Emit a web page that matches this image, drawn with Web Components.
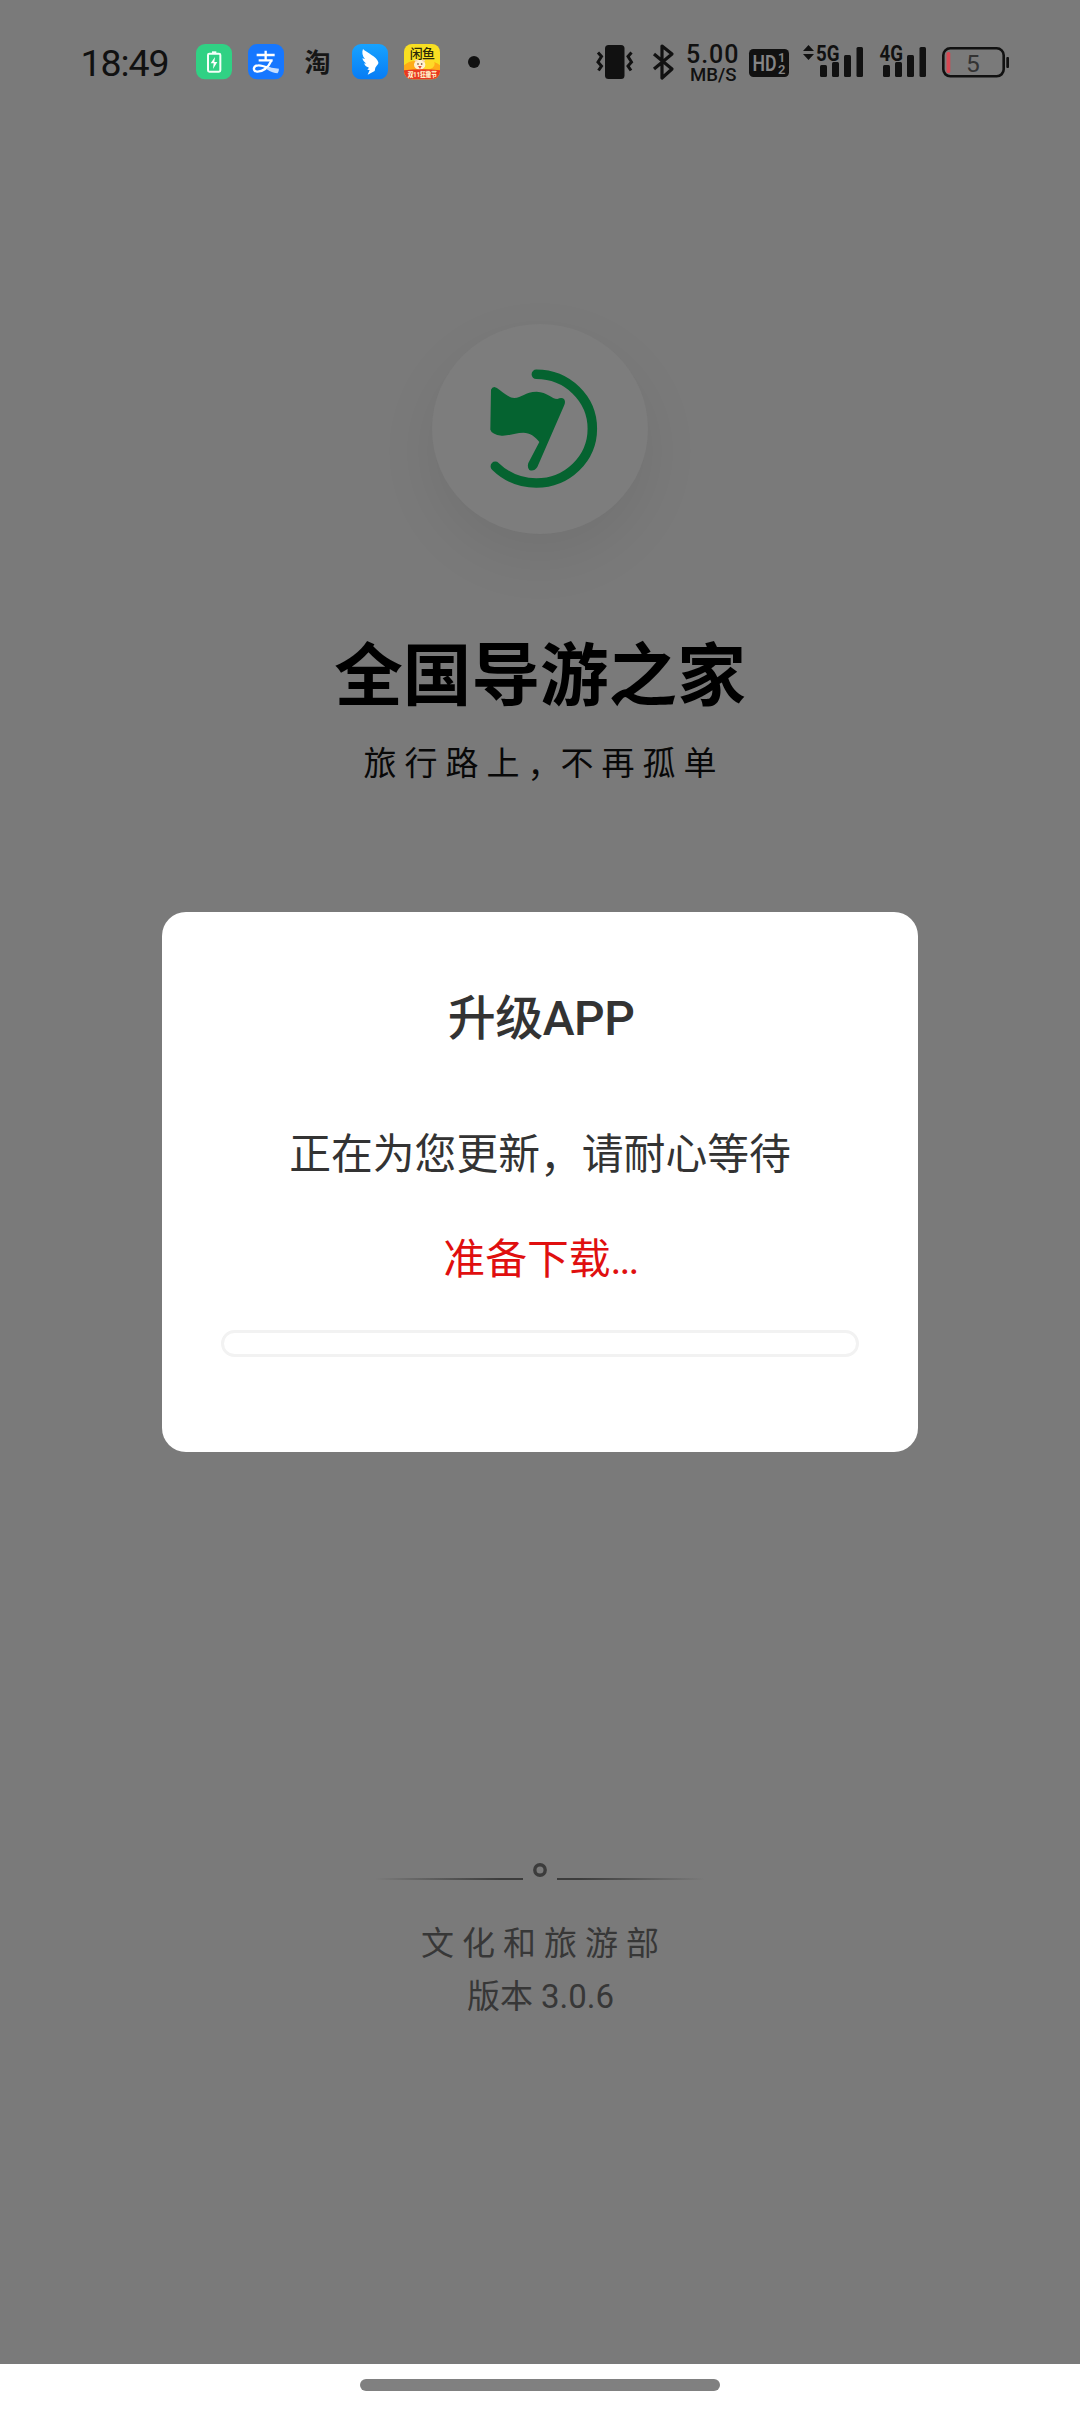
<!DOCTYPE html>
<html lang="zh-CN">
<head>
<meta charset="utf-8">
<title>全国导游之家</title>
<style>
html,body{margin:0;padding:0}
body{width:1080px;height:2412px;overflow:hidden;background:#7a7a7a;font-family:Roboto,"Noto Sans CJK SC",sans-serif}
</style>
</head>
<body>
<guide-app></guide-app>
<script>
const define = (name, html) => customElements.define(name, class extends HTMLElement {
  constructor() {
    super();
    const t = document.createElement('template');
    t.innerHTML = html;
    this.attachShadow({mode: 'open'}).append(t.content.cloneNode(true));
  }
});

define('status-bar', `
<style>
:host{display:flex;align-items:center;justify-content:space-between;height:124px;padding:0 71px 0 81px;box-sizing:border-box;color:#111}
div{display:flex;align-items:center}
svg{display:block;overflow:visible}
.apps{gap:16px}
.apps svg:first-child{margin-right:11px}
</style>
<div class="apps">
  <svg width="88" height="36" viewBox="81 44 88 36"><text x="80.500" y="75.500" font-size="37.500" textLength="89" fill="#111">18:49</text></svg>
  <svg width="36" height="36" viewBox="0 0 108 108"><rect width="108" height="106" rx="27" fill="#30d184"/><path d="M48 22h13v5h-13z" fill="#f4fff9"/><rect x="36" y="29" width="37" height="54" rx="4" fill="none" stroke="#f4fff9" stroke-width="6"/><path d="M57 39 44 58h9l-2 17 13-21h-9z" fill="#fff"/></svg>
  <svg width="36" height="36" viewBox="0 0 108 108"><rect width="108" height="106" rx="27" fill="#1677ff"/><g fill="none" stroke="#fff" stroke-width="7"><path d="M26 33h54M53 20v31M32 49h42"/><path d="M70 50C61 72 43 84 27 83C13 81 15 64 31 64C50 63 65 78 91 81" stroke-linecap="butt"/></g><path d="M60 70l33 4-4 14q-14 0-34-13z" fill="#c4ddff"/></svg>
  <svg width="36" height="36" viewBox="0 0 36 36"><text x="4.500" y="27.500" font-size="26" font-weight="700" fill="#161616">淘</text></svg>
  <svg width="36" height="36" viewBox="0 0 108 108"><defs><linearGradient id="d" x1="0" y1="0" x2="0" y2="1"><stop stop-color="#17a3ff"/><stop offset="1" stop-color="#087cf5"/></linearGradient></defs><rect width="108" height="106" rx="27" fill="url(#d)"/><path d="M33 15C44 26 75 38 79 55C80 60 76 63 70 71L68 81L47 92L53 78L46 77L51 71L42 67C39 64 37 61 37 58L43 59C36 54 32 48 31 43L39 45C31 36 29 25 33 15Z" fill="#fff"/></svg>
  <svg width="36" height="36" viewBox="0 0 108 108"><defs><clipPath id="c"><rect width="108" height="106" rx="24"/></clipPath></defs><g clip-path="url(#c)"><rect width="108" height="108" fill="#f8df22"/><path d="M0 64Q18 48 42 52H72Q94 52 108 64V84H0Z" fill="#ffab18"/><ellipse cx="70" cy="59" rx="22" ry="17" fill="#ffd928"/><ellipse cx="47" cy="62" rx="17" ry="15" fill="#fff0d2"/><path d="M30 49l8-4 3 9zM55 45l9 4-7 7z" fill="#f4d4b8"/><circle cx="42" cy="60" r="2.500" fill="#563216"/><circle cx="53" cy="60" r="2.500" fill="#563216"/><path d="M42 66h11l-5 9z" fill="#ea4a32"/><path d="M0 79Q54 72 108 79V108H0Z" fill="#e93922"/></g><text x="17" y="43" font-size="39" font-weight="500" fill="#2b2908" textLength="76">闲鱼</text><text x="11" y="98" font-size="19" font-weight="900" fill="#fff1c7" textLength="88" lengthAdjust="spacingAndGlyphs">双11狂撒节</text></svg>
  <svg width="56" height="36" viewBox="0 0 56 36"><circle cx="18" cy="18" r="6" fill="#111"/></svg>
</div>
<div>
  <svg width="414" height="40" viewBox="595 42 414 40" fill="#111">
    <rect x="605" y="45" width="19.500" height="34" rx="3.500"/>
    <g fill="none" stroke="#111" stroke-width="3"><path d="M598 52.500l3.500 4-3.500 5.500 3.500 4-3 4.500M631.500 52.500l-3.500 4 3.500 5.500-3.500 4 3 4.500"/></g>
    <path d="M654 54l18 15-10 9V46l10 8-18 15" fill="none" stroke="#111" stroke-width="3.200" stroke-linejoin="round"/>
    <text x="686" y="63" font-size="25" font-weight="500" textLength="52.500">5.00</text>
    <text x="690" y="80.500" font-size="18.500" font-weight="500" textLength="46.500" lengthAdjust="spacingAndGlyphs">MB/S</text>
    <rect x="749" y="49" width="40" height="28" rx="4.500"/>
    <g fill="#858585" font-weight="600"><text x="752.500" y="71" font-size="22" textLength="24" lengthAdjust="spacingAndGlyphs">HD</text><text x="778" y="62" font-size="13">1</text><text x="778" y="73.500" font-size="13">2</text></g>
    <path d="M803 51l5.500-6 5.500 6zM803 54h11l-5.500 6z"/>
    <text x="816" y="60.500" font-size="22" font-weight="700" textLength="23.500" lengthAdjust="spacingAndGlyphs">5G</text>
    <text x="879.500" y="60.500" font-size="22" font-weight="700" textLength="23.500" lengthAdjust="spacingAndGlyphs">4G</text>
    <g><rect x="820" y="65" width="7" height="12" rx="1.500"/><rect x="832" y="62" width="7" height="15" rx="1.500"/><rect x="844" y="55" width="7" height="22" rx="1.500"/><rect x="856.500" y="47" width="6.500" height="30" rx="1.500"/></g>
    <g><rect x="883" y="65" width="7" height="12" rx="1.500"/><rect x="895" y="62" width="7" height="15" rx="1.500"/><rect x="907" y="55" width="7" height="22" rx="1.500"/><rect x="919.500" y="47" width="6.500" height="30" rx="1.500"/></g>
    <rect x="943.300" y="48.300" width="60.400" height="28" rx="7" fill="none" stroke="#111" stroke-width="2.600"/>
    <rect x="946.500" y="52" width="3.800" height="21" rx="1.500" fill="#d64853"/>
    <rect x="1006.300" y="57" width="2.700" height="11" rx="1"/>
    <text x="973" y="71.500" font-size="24.500" text-anchor="middle" fill="#333">5</text>
  </svg>
</div>`);

define('guide-logo', `
<style>
:host{display:block;width:216px;height:210px;border-radius:50%;background:#7d7d7d;box-shadow:0 22px 60px rgba(0,0,0,.07)}
svg{display:block}
</style>
<svg width="216" height="210" viewBox="156 103 648 630" fill="#056330">
  <path d="M469 254C562 254 637 327 637 417C637 507 562 580 469 580C424 580 380 563 346 530" fill="none" stroke="#056330" stroke-width="28.500" stroke-linecap="round"/>
  <path d="M343 292Q350 293 360 302C378 315 388 325 403 325C425 325 435 306 470 306C502 307 515 328 532 328Q545 322 552 328Q558 336 552 348L472 532Q462 547 448 541Q441 533 445 520L478 457C465 440 450 429 430 429C405 429 390 439 365 438Q335 434 331 420L333 300Q336 292 343 292Z"/>
</svg>`);

define('brand-header', `
<style>
:host{display:flex;flex-direction:column;align-items:center;padding-top:200px;color:#000}
h1{margin:104px 0 0;height:78px;line-height:78px;font-size:68.600px;font-weight:700;white-space:nowrap}
p{margin:26px 0 0;height:44px;line-height:44px;font-size:33px;letter-spacing:8px;padding-left:8px;white-space:nowrap;color:#080808}
.c{letter-spacing:0;position:relative;top:2px}
</style>
<guide-logo></guide-logo>
<h1><slot name="title"></slot></h1>
<p>旅行路上<span class="c">，</span>不再孤单</p>`);

define('ring-divider', `
<style>
:host{display:flex;justify-content:center;gap:17px;width:330px;height:18px;align-items:flex-end}
i{display:block;width:148px;height:2px;background:linear-gradient(90deg,transparent,#3c3c3c 85%)}
i:last-child{transform:scaleX(-1)}
svg{display:block;width:14px;height:14px;align-self:flex-start;margin:1px -7px 0;overflow:visible}
</style>
<i></i><svg viewBox="0 0 14 14"><circle cx="7" cy="7" r="5.200" fill="none" stroke="#3c3c3c" stroke-width="3.400"/></svg><i></i>`);

define('app-footer', `
<style>
:host{display:flex;flex-direction:column;align-items:center;color:#373737;font-size:33px;white-space:nowrap}
.dept{margin-top:40px;height:48px;line-height:48px;letter-spacing:8px;padding-left:8px}
.ver{margin-top:5px;height:48px;line-height:48px;padding-left:1px}
</style>
<ring-divider></ring-divider>
<div class="dept"><slot name="department"></slot></div>
<div class="ver"><slot name="version"></slot></div>`);

define('progress-track', `
<style>:host{display:block;box-sizing:border-box;width:638px;height:27px;border:3px solid #f2f2f2;border-radius:14px}</style>`);

define('update-dialog', `
<style>
:host{display:flex;flex-direction:column;align-items:center;box-sizing:border-box;width:756px;height:540px;padding-top:75px;border-radius:24px;background:#fff;color:#333;white-space:nowrap}
h2{margin:0;height:64px;line-height:64px;font-size:48px;font-weight:500;padding-left:2px;letter-spacing:-.5px}
.msg{margin-top:74px;height:60px;line-height:60px;font-size:41.800px}
.msg span{position:relative;top:3px}
.state{margin-top:45px;height:60px;line-height:60px;font-size:41.800px;color:#e00f0f;padding-left:1px}
.dots{letter-spacing:-2px}
progress-track{margin-top:40px}
</style>
<h2><slot name="title"></slot></h2>
<div class="msg">正在为您更新<span>，</span>请耐心等待</div>
<div class="state">准备下载<span class="dots">...</span></div>
<progress-track></progress-track>`);

define('home-indicator', `
<style>
:host{display:flex;justify-content:center;align-items:flex-start;box-sizing:border-box;height:48px;padding-top:15px;background:#fff}
i{width:360px;height:12px;border-radius:6px;background:#808080}
</style><i></i>`);

define('guide-app', `
<style>
:host{display:flex;flex-direction:column;position:relative;width:1080px;height:2412px;background:#7a7a7a}
app-footer{margin-top:auto;margin-bottom:343px}
update-dialog{position:absolute;left:162px;top:912px}
</style>
<status-bar></status-bar>
<brand-header><span slot="title">全国导游之家</span></brand-header>
<app-footer><span slot="department">文化和旅游部</span><span slot="version">版本 3.0.6</span></app-footer>
<home-indicator></home-indicator>
<update-dialog><span slot="title">升级APP</span></update-dialog>`);
</script>
</body>
</html>
